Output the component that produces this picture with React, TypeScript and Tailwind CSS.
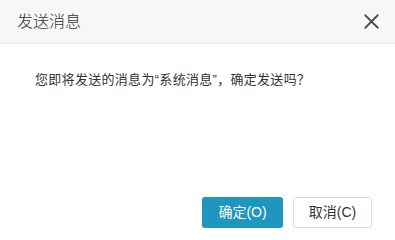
import { X } from 'lucide-react'

export default function App() {
  return (
    <div
      className="flex h-[237px] w-[395px] flex-col bg-white text-[#333]"
      style={{ fontFamily: '"Liberation Sans", "Noto Sans CJK SC", sans-serif' }}
    >
      <div className="flex h-[44px] shrink-0 items-center justify-between border-b border-[#ebebeb] bg-[#f7f7f7] pl-[17px] pr-[11px]">
        <span className="text-[16px] font-light leading-[24px] text-[#333]">发送消息</span>
        <X className="h-[25px] w-[25px] text-[#4a4a55]" strokeWidth={1.7} />
      </div>

      <div className="flex-1 pl-[35px] pt-[27px]">
        <p className="text-[13px] leading-[18px] tracking-[0.3px] text-[#333]">
          您即将发送的消息为“系统消息”，确定发送吗？
        </p>
      </div>

      <div className="flex justify-end gap-[10px] pb-[9px] pr-[23px]">
        <button className="h-[31px] w-[81px] rounded-[3px] bg-[#1e96c0] text-[14px] text-white">
          确定(O)
        </button>
        <button className="h-[31px] w-[79px] rounded-[3px] border border-[#dcdcdc] bg-white text-[14px] text-[#333]">
          取消(C)
        </button>
      </div>
    </div>
  )
}
